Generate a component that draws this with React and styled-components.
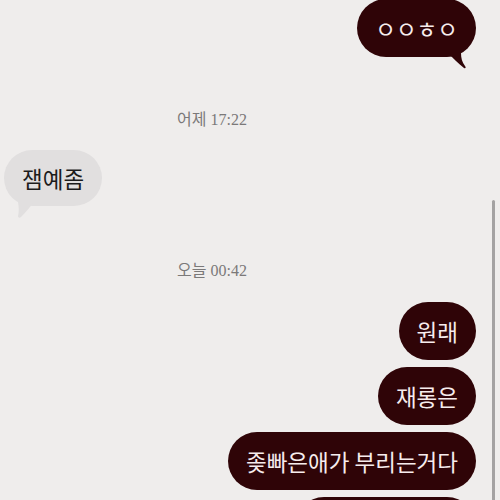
import React from 'react'
import styled, { createGlobalStyle } from 'styled-components'

const GlobalStyles = createGlobalStyle`
  html, body {
    margin:0;
    padding:0;
    background:#efedec;
  }
`;

const Screen = styled.main`
  position:relative;
  width:500px;
  height:500px;
  overflow:hidden;
  background:#efedec;
`;

const Thread = styled.div`
  display:flex;
  flex-direction:column;
  padding:0 24px 0 4px;
`;

const Row = styled.div`
  display:flex;
  justify-content:${p => (p.$mine ? 'flex-end' : 'flex-start')};
  margin-top:${p => p.$top || 0}px;
`;

const Bubble = styled.div`
  position:relative;
  display:flex;
  align-items:center;
  height:${p => p.$h || 58}px;
  padding:0 18px;
  border-radius:29px;
  background:${p => (p.$mine ? '#2f0407' : '#e1dfdf')};
  color:${p => (p.$mine ? '#f6eced' : '#1c1c1c')};
  font-family:'Noto Sans CJK KR', 'Noto Sans', sans-serif;
  font-size:22.5px;
  white-space:nowrap;
`;

const Tail = styled.svg`
  position:absolute;
  bottom:-12px;
  ${p => (p.$mine ? 'right:8px;' : 'left:12px;')}
`;

const Stamp = styled.div`
  margin:${p => p.$top}px 0 ${p => p.$bottom}px;
  text-align:center;
  height:20px;
  line-height:20px;
  padding-right:56px;
  color:#7b7979;
  font-family:'Liberation Serif', 'Noto Sans CJK KR', serif;
  font-size:16px;
`;

const Thumb = styled.div`
  position:absolute;
  top:200px;
  right:5px;
  width:3px;
  height:320px;
  border-radius:2px;
  background:#a4a2a2;
`;

const Message = ({ mine, top, h, tail, children }) => (
  <Row $mine={mine} $top={top}>
    <Bubble $mine={mine} $h={h}>
      {children}
      {tail && mine && (
        <Tail $mine width="20" height="16" viewBox="0 0 20 16">
          <path d="M0 0 C6 6 10 10 16 15 C18 16 18 14 17 13 C14 9 13 5 13 0 Z" fill="#2f0407" />
        </Tail>
      )}
      {tail && !mine && (
        <Tail width="20" height="16" viewBox="0 0 20 16">
          <path d="M2 0 C3 6 3 10 2 14 C2 16 4 16 5 15 C10 10 14 5 18 0 Z" fill="#e1dfdf" />
        </Tail>
      )}
    </Bubble>
  </Row>
);

export default function App() {
  return (
    <>
      <GlobalStyles />
      <Screen>
        <Thread>
          <Message mine tail top={-1} h={58}>ㅇㅇㅎㅇ</Message>
          <Stamp $top={53} $bottom={20}>어제 17:22</Stamp>
          <Message tail h={56}>잼예좀</Message>
          <Stamp $top={55} $bottom={21}>오늘 00:42</Stamp>
          <Message mine>원래</Message>
          <Message mine top={7}>재롱은</Message>
          <Message mine top={7}>좆빠은애가 부리는거다</Message>
          <Message mine top={7}>ㅋㅋㅋㅋㅋㅋㅋ</Message>
        </Thread>
        <Thumb />
      </Screen>
    </>
  );
}
